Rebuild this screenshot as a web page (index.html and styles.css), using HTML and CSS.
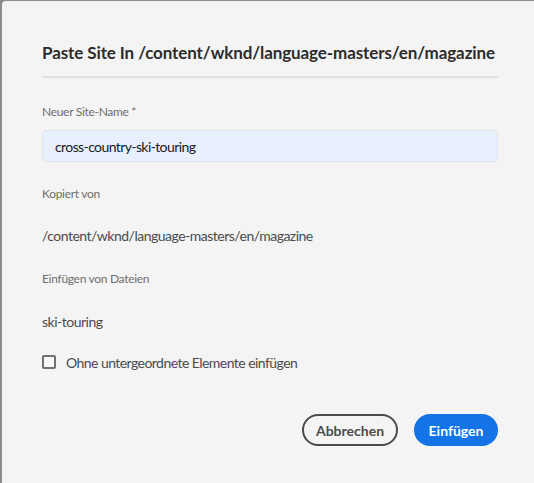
FILE: index.html
```html
<!DOCTYPE html>
<html lang="de">
<head>
<meta charset="utf-8">
<title>Paste Site</title>
<link rel="stylesheet" href="styles.css">
</head>
<body>
<div class="dialog">
  <h1 class="title">Paste Site In /content/wknd/language-masters/en/magazine</h1>
  <div class="divider"></div>
  <div class="form">
    <label class="label first">Neuer Site-Name *</label>
    <div class="input">cross-country-ski-touring</div>
    <div class="label l2">Kopiert von</div>
    <div class="value">/content/wknd/language-masters/en/magazine</div>
    <div class="label l3">Einfügen von Dateien</div>
    <div class="value">ski-touring</div>
    <label class="check">
      <span class="box"></span>
      <span>Ohne untergeordnete Elemente einfügen</span>
    </label>
  </div>
  <div class="footer">
    <button class="btn secondary"><span class="caret"></span>Abbrechen</button>
    <button class="btn primary">Einfügen</button>
  </div>
</div>
</body>
</html>
```
FILE: styles.css
```css
html, body {
  margin: 0;
  padding: 0;
  height: 100%;
  overflow: hidden;
}
body {
  background: #8c8c8c;
  font-family: Lato, "Open Sans", sans-serif;
  padding: 1px 0 0 2px;
  box-sizing: border-box;
}
.dialog {
  background: #f4f4f4;
  border-top-left-radius: 4px;
  height: 100%;
  padding: 40px 0 0 40px;
  box-sizing: border-box;
  display: flex;
  flex-direction: column;
}
.title {
  margin: 0;
  font-size: 17px;
  line-height: 23px;
  font-weight: 700;
  letter-spacing: -0.1px;
  color: #2c2c2c;
  width: 456px;
  white-space: nowrap;
}
.divider {
  margin-top: 12px;
  width: 456px;
  height: 2px;
  background: #e1e1e1;
}
.form {
  width: 456px;
  display: flex;
  flex-direction: column;
}
.label {
  font-size: 12px;
  line-height: 18px;
  letter-spacing: -0.3px;
  color: #6e6e6e;
}
.label.first { margin-top: 25px; }
.label.l2 { margin-top: 23px; }
.label.l3 { margin-top: 24px; }
.input {
  margin-top: 9px;
  height: 32px;
  box-sizing: border-box;
  border: 1px solid #dfe3ea;
  border-radius: 4px;
  background: #e8f0fe;
  padding: 0 12px;
  display: flex;
  align-items: center;
  font-size: 14px;
  letter-spacing: -0.6px;
  color: #1a1a1a;
}
.value {
  margin-top: 23px;
  font-size: 14px;
  line-height: 20px;
  letter-spacing: -0.5px;
  color: #4b4b4b;
}
.l3 + .value { margin-top: 24px; }
.check {
  margin-top: 20px;
  height: 20px;
  display: flex;
  align-items: center;
  gap: 10px;
  font-size: 14px;
  letter-spacing: -0.55px;
  color: #4b4b4b;
}
.box {
  width: 14px;
  height: 14px;
  box-sizing: border-box;
  border: 2px solid #707070;
  border-radius: 2px;
  background: #f8f8f8;
}
.footer {
  margin-top: 42px;
  width: 456px;
  display: flex;
  justify-content: flex-end;
  gap: 16px;
}
.btn {
  height: 32px;
  box-sizing: border-box;
  border-radius: 16px;
  font-family: Lato, "Open Sans", sans-serif;
  font-size: 14px;
  font-weight: 700;
  padding: 0 14px;
  display: flex;
  align-items: center;
}
.secondary {
  width: 96px;
  background: transparent;
  border: 2px solid #4b4b4b;
  color: #4b4b4b;
  justify-content: center;
}
.caret {
  display: inline-block;
  width: 1px;
  height: 18px;
  background: #2c2c2c;
}
.primary {
  width: 84px;
  background: #1473e6;
  border: 2px solid #1473e6;
  color: #fff;
  justify-content: center;
}
```
